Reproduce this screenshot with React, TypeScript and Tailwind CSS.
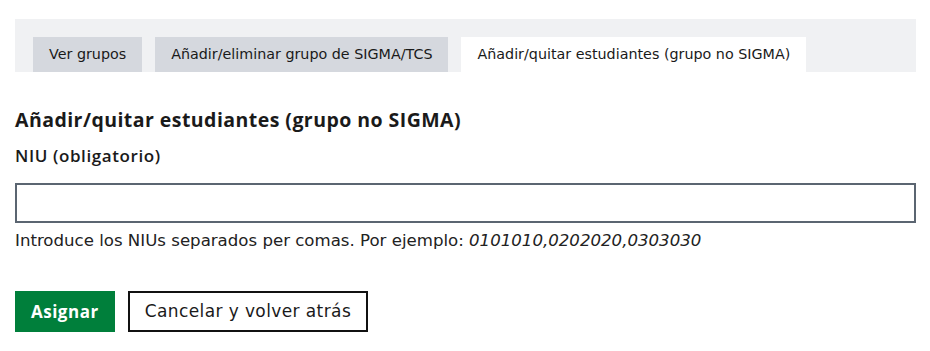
export default function App() {
  const tabs = [
    { label: 'Ver grupos', active: false },
    { label: 'Añadir/eliminar grupo de SIGMA/TCS', active: false },
    { label: 'Añadir/quitar estudiantes (grupo no SIGMA)', active: true },
  ];

  return (
    <div className="bg-white px-[15px] pt-[19px] pr-[14px] text-[#1a1a1a] font-['Open_Sans',sans-serif]">
      <div className="flex items-end gap-[13px] bg-[#f0f1f3] pl-[18px] pt-[18px]">
        {tabs.map((tab) => (
          <div
            key={tab.label}
            className={
              "h-[35px] px-4 flex items-center text-[14.3px] font-['DejaVu_Sans',sans-serif] " +
              (tab.active ? 'bg-white' : 'bg-[#d5d8de]')
            }
          >
            {tab.label}
          </div>
        ))}
      </div>

      <h2 className="mt-[34px] text-[19.5px] font-bold leading-[28px] tracking-[0.45px]">
        Añadir/quitar estudiantes (grupo no SIGMA)
      </h2>

      <label className="block mt-[10px] text-[17px] font-semibold leading-[24px] tracking-[0.6px]">
        NIU (obligatorio)
      </label>

      <input
        type="text"
        className="block mt-[15px] w-full h-[40px] border-2 border-[#5b6571] bg-white outline-none"
      />

      <p className="mt-[6px] text-[16.6px] leading-[24px] text-[#222] font-['DejaVu_Sans',sans-serif]">
        Introduce los NIUs separados per comas. Por ejemplo: <em>0101010,0202020,0303030</em>
      </p>

      <div className="flex gap-[13px] mt-[38px]">
        <button className="h-[41px] px-4 bg-[#007f3b] text-white text-[17px] font-bold tracking-[0.5px]">
          Asignar
        </button>
        <button className="h-[41px] px-[15px] border-2 border-[#111] bg-white text-[17px] tracking-[0.4px] font-['DejaVu_Sans',sans-serif]">
          Cancelar y volver atrás
        </button>
      </div>
    </div>
  );
}
